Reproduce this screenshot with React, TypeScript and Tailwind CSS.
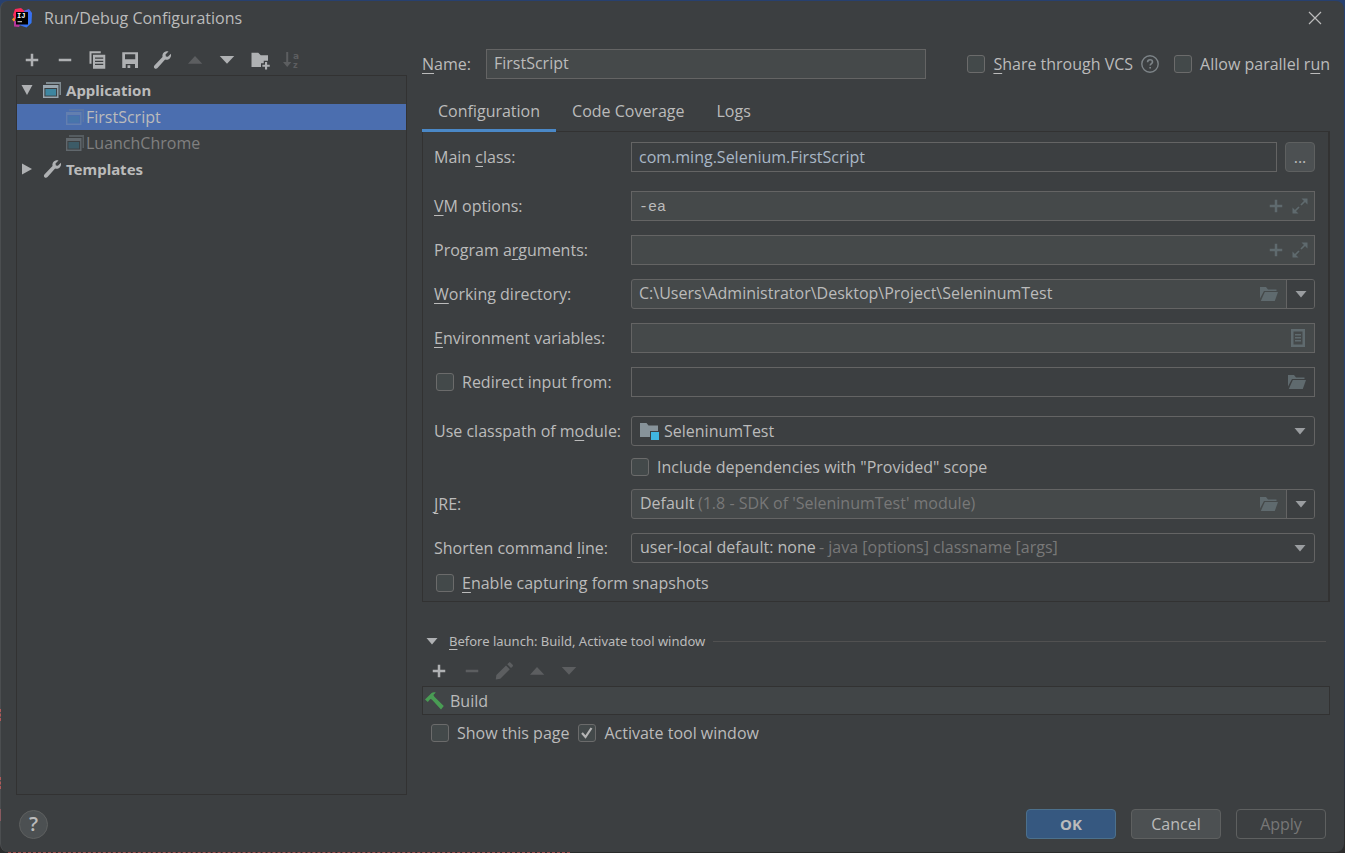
import { useState } from "react";
import type { ReactNode } from "react";

type IconProps = { className?: string };

const PlusIcon = ({ className = "" }: IconProps) => (
  <svg viewBox="0 0 16 16" className={`size-5 ${className}`} fill="currentColor">
    <path d="M7 3h2v4h4v2H9v4H7V9H3V7h4z" />
  </svg>
);

const MinusIcon = ({ className = "" }: IconProps) => (
  <svg viewBox="0 0 16 16" className={`size-5 ${className}`} fill="currentColor">
    <path d="M3 7h10v2H3z" />
  </svg>
);

const CopyIcon = ({ className = "" }: IconProps) => (
  <svg viewBox="0 0 16 16" className={`size-5 ${className}`} fill="currentColor">
    <path d="M2 1h9v1.6H3.6V11H2z" />
    <path
      fillRule="evenodd"
      d="M4.8 3.7H14.6V15H4.8zM6.4 6v1h6.6V6zM6.4 8.5v1h6.6v-1zM6.4 11v1h6.6v-1z"
    />
  </svg>
);

const SaveIcon = ({ className = "" }: IconProps) => (
  <svg viewBox="0 0 16 16" className={`size-5 ${className}`} fill="currentColor">
    <path
      fillRule="evenodd"
      d="M1.8 1.8h12.6v12.6H12v-3.2H4.6v3.2H1.8zM4 3.4v4h8.2v-4z"
    />
    <path d="M6 12.2h2.2v2.2H6z" />
  </svg>
);

const WrenchIcon = ({ className = "" }: IconProps) => (
  <svg viewBox="0 0 16 16" className={`size-5 ${className}`} fill="currentColor">
    <path d="M10.9 1.2c.8-.3 1.6-.3 2.3-.1L10.8 3.6l.3 1.5 1.6.3 2.4-2.4c.4 1.3.1 2.7-.9 3.7-1 1-2.4 1.3-3.7.9L4.4 14.4c-.6.7-1.7.8-2.4.1s-.6-1.800.1-2.400l6.300-6.500c-.5-1.900.7-3.900 2.500-4.400z" />
  </svg>
);

const UpIcon = ({ className = "" }: IconProps) => (
  <svg viewBox="0 0 16 16" className={`size-5 ${className}`} fill="currentColor">
    <path d="M8 4.8 13.8 11H2.4z" />
  </svg>
);

const DownIcon = ({ className = "" }: IconProps) => (
  <svg viewBox="0 0 16 16" className={`size-5 ${className}`} fill="currentColor">
    <path d="M8 11 2.2 4.8h11.6z" />
  </svg>
);

const NewFolderIcon = ({ className = "" }: IconProps) => (
  <svg viewBox="0 0 16 16" className={`size-5 ${className}`} fill="currentColor">
    <path d="M1.2 2.2h5.4l2 2h5.800v4.400h-3.400v2H8.800v3H1.200z" />
    <path d="M12 9.6h1.700v2.100h2.100v1.700h-2.100v2.100H12v-2.100H9.900v-1.700H12z" />
  </svg>
);

const SortIcon = ({ className = "" }: IconProps) => (
  <svg viewBox="0 0 20 20" className={`size-5 ${className}`} fill="currentColor">
    <path d="M4.2 2h2v10h3.200L5.200 17 1 12h3.200z" />
    <text x="11" y="8.5" fontSize="9" fontWeight="700" fontFamily="DejaVu Sans, sans-serif">
      a
    </text>
    <text x="11" y="18" fontSize="8" fontWeight="700" fontFamily="DejaVu Sans, sans-serif">
      z
    </text>
  </svg>
);

const PencilIcon = ({ className = "" }: IconProps) => (
  <svg viewBox="0 0 16 16" className={`size-5 ${className}`} fill="currentColor">
    <path d="M9.6 3.6 12.6 6.6 5 14.2l-3.600.600.500-3.600zM10.600 2.600l1.300-1.300c.4-.4.9-.4 1.300 0l1.700 1.700c.4.4.4.9 0 1.300l-1.300 1.300z" />
  </svg>
);

const AppIcon = ({ className = "" }: IconProps) => (
  <svg viewBox="0 0 20 20" className={`size-5 ${className}`}>
    <path fill="#7f8b91" d="M4 2h15v13h-1.500V4H4z" />
    <path fill="#9aa7b0" fillRule="evenodd" d="M1 5h15.500v13H1zM2.400 8v8.600h12.700V8z" />
    <path fill="#3e86a0" d="M3.400 9h10.700v6.600H3.400z" />
  </svg>
);

const OpenFolderIcon = ({ className = "" }: IconProps) => (
  <svg viewBox="0 0 20 16" className={`h-4 w-5 ${className}`} fill="currentColor">
    <path d="M1 1h6l2 2.500h8.500V5H5L1 12.500z" />
    <path d="M5.800 6H19l-3.200 9H1.800z" />
  </svg>
);

const ExpandIcon = ({ className = "" }: IconProps) => (
  <svg viewBox="0 0 16 16" className={`size-4 ${className}`} fill="currentColor">
    <path d="M9.500.500h6v6zM.500 9.500v6h6z" />
    <path d="M3 13l4-4M9 7l4-4" stroke="currentColor" strokeWidth="1.700" />
  </svg>
);

const ListIcon = ({ className = "" }: IconProps) => (
  <svg viewBox="0 0 14 18" className={`h-[18px] w-3.5 ${className}`} fill="currentColor">
    <path fillRule="evenodd" d="M0 0h14v18H0zM2.500 2.500v13h9v-13z" />
    <path d="M4 5h6v1.400H4zM4 8h6v1.400H4zM4 11h6v1.400H4z" />
  </svg>
);

const ModuleIcon = ({ className = "" }: IconProps) => (
  <svg viewBox="0 0 20 20" className={`size-5 ${className}`}>
    <path fill="#87939a" d="M0 2h6.500l2 2.500H18V10h-8v6H0z" />
    <path fill="#40b6e0" d="M11 11h8v8h-8z" />
  </svg>
);

const HammerIcon = ({ className = "" }: IconProps) => (
  <svg viewBox="0 0 20 20" className={`size-5 ${className}`} fill="#499c54">
    <path d="M0 8.600 6.600 2c1.200-.9 2.800-1 4.200-.4L8.400 4.100l1 1.600 9.400 9.400-2.800 3.300-9.200-9.800-1.500-.600-2.500 3z" />
  </svg>
);

const HelpIcon = ({ className = "" }: IconProps) => (
  <svg viewBox="0 0 18 18" className={`size-[18px] ${className}`} fill="none" stroke="currentColor">
    <circle cx="9" cy="9" r="8.200" strokeWidth="1.400" />
    <path d="M6.600 7.200c0-1.500 1-2.400 2.500-2.400s2.400.9 2.400 2.100c0 1.600-2.300 1.800-2.300 3.600" strokeWidth="1.600" />
    <path d="M8.300 12h1.700v1.600H8.300z" fill="currentColor" stroke="none" />
  </svg>
);

const CloseIcon = () => (
  <svg viewBox="0 0 14 14" className="size-3.5" fill="none" stroke="currentColor" strokeWidth="1.200">
    <path d="M1 1l12 12M13 1L1 13" />
  </svg>
);

const ArrowIcon = ({ className = "" }: IconProps) => (
  <svg viewBox="0 0 12 7" className={`h-[7px] w-3 ${className}`} fill="currentColor">
    <path d="M0.500 0h11L6 6.500z" />
  </svg>
);

const TreeArrow = ({ className = "" }: IconProps) => (
  <svg viewBox="0 0 12 12" className={`size-3 ${className}`} fill="currentColor">
    <path d="M.500 1h11L6 11z" />
  </svg>
);

const Logo = () => (
  <svg viewBox="0 0 20 20" className="size-5">
    <defs>
      <linearGradient id="blue" x1="0" y1="0" x2="1" y2="1">
        <stop offset="0" stopColor="#8a4fd8" />
        <stop offset="0.5" stopColor="#3b6cf0" />
        <stop offset="1" stopColor="#2f7df6" />
      </linearGradient>
    </defs>
    <path fill="#f9862c" d="M0 11.500L3 8v7z" />
    <path fill="#b8359b" d="M2 13h8l-3 6-5-.500z" />
    <path fill="url(#blue)" d="M11 3l6-2 3 4-.500 10-5 4.500L7 17z" />
    <path fill="#fb2a5b" d="M3 1L9 0l3.500 3L10 7l-7 4-2-4z" />
    <path fill="#000" d="M4 4h12v12.500H4z" />
    <text x="5" y="10" fontSize="7" fontWeight="700" fill="#fff" fontFamily="Liberation Mono, monospace">
      IJ
    </text>
    <path fill="#ddd" d="M5.500 13.200H10v1H5.500z" />
  </svg>
);

const Checkbox = ({
  id,
  children,
  defaultChecked = false,
}: {
  id: string;
  children: ReactNode;
  defaultChecked?: boolean;
}) => (
  <div className="flex items-center gap-2">
    <span className="relative flex">
      <input
        id={id}
        type="checkbox"
        defaultChecked={defaultChecked}
        className="peer size-[18px] appearance-none rounded-[3px] border border-[#6b6b6b] bg-[#43494a]"
      />
      <svg
        viewBox="0 0 18 18"
        className="pointer-events-none absolute inset-0 hidden size-[18px] peer-checked:block"
        fill="none"
        stroke="#b5b5b5"
        strokeWidth="2.200"
      >
        <path d="M4 9l3.500 4L13.500 4" />
      </svg>
    </span>
    <label htmlFor={id}>{children}</label>
  </div>
);

const Row = ({ id, label, children }: { id: string; label: ReactNode; children: ReactNode }) => (
  <div className="flex items-center">
    <label htmlFor={id} className="w-[197px] shrink-0">
      {label}
    </label>
    {children}
  </div>
);

const Key = ({ children }: { children: ReactNode }) => (
  <span className="underline decoration-1 underline-offset-3">{children}</span>
);

const ToolButton = ({
  label,
  disabled = false,
  children,
}: {
  label: string;
  disabled?: boolean;
  children: ReactNode;
}) => (
  <button
    type="button"
    aria-label={label}
    disabled={disabled}
    className="text-[#afb1b3] disabled:text-[#5c5e60]"
  >
    {children}
  </button>
);

const fieldBox = "flex h-[30px] min-w-0 flex-1 items-center border border-[#646464]";
const fieldInput = "h-full min-w-0 flex-1 bg-transparent px-[7px] outline-none";
const monoInput = `${fieldInput} pt-0.5 font-['Liberation_Mono',monospace] text-[15px] text-[#bbbbbb]`;
const treeHeading = "flex items-center pl-1 text-left font-['Noto_Sans',sans-serif] text-[15px] font-bold";

const tabs = ["Configuration", "Code Coverage", "Logs"];

const App = () => {
  const [activeTab, setActiveTab] = useState("Configuration");
  const [selected, setSelected] = useState("FirstScript");

  return (
    <div className="relative flex min-h-screen flex-col bg-linear-to-b from-[#27406f] from-70% to-[#2b2b2b] pt-px pr-px font-['Open_Sans',sans-serif] text-[16px] leading-5 text-[#bbbbbb]">
      <div className="flex flex-1 flex-col rounded-lg border-l border-[#4b4e50] bg-[#3c3f41]">
        <header className="flex h-[35px] items-center pr-[22px] pb-0.5 pl-[11px]">
          <Logo />
          <h1 className="ml-3 flex-1">Run/Debug Configurations</h1>
          <button type="button" aria-label="Close">
            <CloseIcon />
          </button>
        </header>

        <main className="flex flex-1 gap-[15px] pr-[14px] pl-[15px]">
          <aside className="flex w-[391px] shrink-0 flex-col">
            <div className="flex h-[39px] w-[286px] items-end justify-between pb-[5px] pl-[6px]">
              <ToolButton label="Add"><PlusIcon /></ToolButton>
              <ToolButton label="Remove"><MinusIcon /></ToolButton>
              <ToolButton label="Copy"><CopyIcon /></ToolButton>
              <ToolButton label="Save"><SaveIcon /></ToolButton>
              <ToolButton label="Edit templates"><WrenchIcon /></ToolButton>
              <ToolButton label="Move up" disabled><UpIcon /></ToolButton>
              <ToolButton label="Move down"><DownIcon /></ToolButton>
              <ToolButton label="New folder"><NewFolderIcon /></ToolButton>
              <ToolButton label="Sort" disabled><SortIcon /></ToolButton>
            </div>

            <div className="flex flex-1 flex-col border border-[#323232]">
              <button type="button" className={`${treeHeading} h-7`}>
                <TreeArrow className="text-[#afb1b3]" />
                <AppIcon className="mr-1 ml-[9px]" />
                Application
              </button>
              {["FirstScript", "LuanchChrome"].map((name) => (
                <button
                  key={name}
                  type="button"
                  onClick={() => setSelected(name)}
                  className={`flex h-[26px] items-center pl-12 text-left ${
                    selected === name ? "bg-[#4b6eaf] text-[#bbbbbb]" : "text-[#808080]"
                  }`}
                >
                  <AppIcon className={`mr-px ${selected === name ? "opacity-30" : "opacity-40"}`} />
                  {name}
                </button>
              ))}
              <button type="button" className={`${treeHeading} h-[26px]`}>
                <TreeArrow className="-rotate-90 text-[#afb1b3]" />
                <WrenchIcon className="mr-1 ml-[9px] text-[#afb1b3]" />
                Templates
              </button>
            </div>
          </aside>

          <section className="flex min-w-0 flex-1 flex-col">
            <div className="mt-3 flex h-[31px] items-center">
              <label htmlFor="name" className="w-16 shrink-0">
                <Key>N</Key>ame:
              </label>
              <input
                id="name"
                defaultValue="FirstScript"
                className="h-[30px] min-w-0 flex-1 border border-[#646464] bg-[#45494a] px-[7px] pb-0.5 outline-none"
              />
              <div className="ml-[41px] flex items-center">
                <Checkbox id="vcs"><Key>S</Key>hare through VCS</Checkbox>
                <button type="button" aria-label="Help" className="mr-[15px] ml-2 text-[#7d8488]">
                  <HelpIcon />
                </button>
                <Checkbox id="parallel">Allow parallel r<Key>u</Key>n</Checkbox>
              </div>
            </div>

            <div role="tablist" className="relative mt-[13px] -mb-px flex h-10">
              {tabs.map((tab) => (
                <button
                  key={tab}
                  type="button"
                  role="tab"
                  aria-selected={activeTab === tab}
                  onClick={() => setActiveTab(tab)}
                  className={`border-b-[3px] px-4 ${
                    activeTab === tab ? "border-[#4a88c7]" : "border-transparent"
                  }`}
                >
                  {tab}
                </button>
              ))}
            </div>

            <div className="flex flex-col gap-3.5 border border-r-2 border-[#323232] pt-2.5 pr-[13px] pb-2 pl-[11px]">
              <div className="mb-[5px]">
                <Row id="main" label={<>Main <Key>c</Key>lass:</>}>
                  <div className={fieldBox}>
                    <input id="main" defaultValue="com.ming.Selenium.FirstScript" className={`${fieldInput} text-[#a9b7c6]`} />
                  </div>
                  <button
                    type="button"
                    aria-label="Browse"
                    className="ml-2 h-[30px] w-[30px] rounded-[4px] border border-[#5e6060] bg-[#4c5052]"
                  >
                    ...
                  </button>
                </Row>
              </div>

              <Row id="vm" label={<><Key>V</Key>M options:</>}>
                <div className={`${fieldBox} bg-[#45494a] pr-1.5 text-[#5f6a6e]`}>
                  <input id="vm" defaultValue="-ea" className={monoInput} />
                  <button type="button" aria-label="Insert macro"><PlusIcon /></button>
                  <button type="button" aria-label="Expand" className="ml-1.5"><ExpandIcon /></button>
                </div>
              </Row>

              <Row id="args" label={<>Program a<Key>r</Key>guments:</>}>
                <div className={`${fieldBox} bg-[#45494a] pr-1.5 text-[#5f6a6e]`}>
                  <input id="args" className={monoInput} />
                  <button type="button" aria-label="Insert macro"><PlusIcon /></button>
                  <button type="button" aria-label="Expand" className="ml-1.5"><ExpandIcon /></button>
                </div>
              </Row>

              <Row id="dir" label={<><Key>W</Key>orking directory:</>}>
                <div className={`${fieldBox} rounded-[3px] bg-[#45494a]`}>
                  <input id="dir" defaultValue="C:\Users\Administrator\Desktop\Project\SeleninumTest" className={`${fieldInput} pb-0.5`} />
                  <button type="button" aria-label="Browse folder" className="mr-[7px] text-[#5f6a6e]"><OpenFolderIcon /></button>
                  <button
                    type="button"
                    aria-label="Show directories"
                    className="flex h-full w-7 items-center justify-center rounded-r-[2px] border-l border-[#646464] bg-[#3c3f41] text-[#9a9da0]"
                  >
                    <ArrowIcon />
                  </button>
                </div>
              </Row>

              <Row id="env" label={<><Key>E</Key>nvironment variables:</>}>
                <div className={`${fieldBox} bg-[#45494a]`}>
                  <input id="env" className={fieldInput} />
                  <button type="button" aria-label="Edit variables" className="mr-[9px] text-[#5f6a6e]"><ListIcon /></button>
                </div>
              </Row>

              <div className="mb-[5px] flex items-center">
                <div className="w-[197px] shrink-0 pl-0.5">
                  <Checkbox id="redirect">Redirect input from:</Checkbox>
                </div>
                <div className={fieldBox}>
                  <input aria-label="Redirect input file" className={fieldInput} />
                  <button type="button" aria-label="Browse file" className="mr-[7px] text-[#5f6a6e]"><OpenFolderIcon /></button>
                </div>
              </div>

              <div className="-mb-0.5">
                <Row id="module" label={<>Use classpath of m<Key>o</Key>dule:</>}>
                  <div className={`${fieldBox} rounded-[3px] pl-2`}>
                    <ModuleIcon />
                    <select id="module" className="h-full flex-1 appearance-none pl-1 outline-none">
                      <option>SeleninumTest</option>
                    </select>
                    <ArrowIcon className="mr-2 text-[#9a9da0]" />
                  </div>
                </Row>
                <div className="mt-[11px] pl-[197px]">
                  <Checkbox id="provided">Include dependencies with "Provided" scope</Checkbox>
                </div>
              </div>

              <Row id="jre" label={<><Key>J</Key>RE:</>}>
                <div className={`${fieldBox} rounded-[3px] bg-[#45494a] pl-2`}>
                  <select id="jre" className="h-full appearance-none pb-0.5 outline-none">
                    <option>Default</option>
                  </select>
                  <span className="ml-[3px] flex-1 pb-0.5 text-[#787878]">(1.8 - SDK of 'SeleninumTest' module)</span>
                  <button type="button" aria-label="Browse JRE" className="mr-[7px] text-[#5f6a6e]"><OpenFolderIcon /></button>
                  <button
                    type="button"
                    aria-label="Show JREs"
                    className="flex h-full w-7 items-center justify-center rounded-r-[2px] border-l border-[#646464] bg-[#3c3f41] text-[#9a9da0]"
                  >
                    <ArrowIcon />
                  </button>
                </div>
              </Row>

              <Row id="shorten" label={<>Shorten command <Key>l</Key>ine:</>}>
                <div className={`${fieldBox} rounded-[3px] pl-2`}>
                  <select id="shorten" className="h-full appearance-none pb-0.5 outline-none">
                    <option>user-local default: none</option>
                  </select>
                  <span className="ml-[3px] flex-1 pb-0.5 text-[#787878]">- java [options] classname [args]</span>
                  <ArrowIcon className="mr-2 text-[#9a9da0]" />
                </div>
              </Row>

              <div className="-mt-1 pl-0.5">
                <Checkbox id="snapshots"><Key>E</Key>nable capturing form snapshots</Checkbox>
              </div>
            </div>

            <div className="mt-[29px] mr-1 flex items-center font-['Noto_Sans',sans-serif] text-[13px]">
              <button type="button" className="flex items-center pl-1">
                <ArrowIcon className="mr-[11px] text-[#afb1b3]" />
                <span><Key>B</Key>efore launch: Build, Activate tool window</span>
              </button>
              <hr className="ml-2 flex-1 border-[#515151]" />
            </div>

            <div className="mt-2.5 flex w-[157px] justify-between pl-[7px]">
              <ToolButton label="Add task"><PlusIcon /></ToolButton>
              <ToolButton label="Remove task" disabled><MinusIcon /></ToolButton>
              <ToolButton label="Edit task" disabled><PencilIcon /></ToolButton>
              <ToolButton label="Move task up" disabled><UpIcon /></ToolButton>
              <ToolButton label="Move task down" disabled><DownIcon /></ToolButton>
            </div>

            <div className="mt-[5px] flex h-[29px] items-center border border-[#323232] bg-[#414547] pl-0.5">
              <HammerIcon />
              <span className="ml-[5px]">Build</span>
            </div>

            <div className="mt-2 flex gap-[9px] pl-[9px]">
              <Checkbox id="show">Show this page</Checkbox>
              <Checkbox id="activate" defaultChecked>Activate tool window</Checkbox>
            </div>
          </section>
        </main>

        <footer className="flex items-center gap-[15px] px-[18px] pt-3.5 pb-[13px]">
          <button
            type="button"
            aria-label="Help"
            className="mr-auto size-[29px] rounded-full border border-[#5e6060] bg-[#4c5052] text-[20px] font-semibold"
          >
            ?
          </button>
          <button type="button" className="h-[30px] w-[90px] rounded-[4px] border border-[#4c708c] bg-[#365880] font-['Noto_Sans',sans-serif] text-[15px] font-bold">
            OK
          </button>
          <button type="button" className="h-[30px] w-[90px] rounded-[4px] border border-[#5e6060] bg-[#4c5052]">
            Cancel
          </button>
          <button type="button" disabled className="h-[30px] w-[90px] rounded-[4px] border border-[#5e6060] text-[#777777]">
            Apply
          </button>
        </footer>
      </div>

      {/* editor text showing past the dialog's edges */}
      <div className="ml-2 w-[562px] border-b border-dashed border-[#a04c4c]" />
      <div className="absolute bottom-[132px] left-0 h-3 border-l border-dashed border-[#b05a5a]" />
      <div className="absolute bottom-16 left-0 h-3 border-l border-dashed border-[#b05a5a]" />
      <div className="absolute bottom-8 left-0 h-3 border-l border-[#8a5a60]" />
    </div>
  );
};

export default App;
